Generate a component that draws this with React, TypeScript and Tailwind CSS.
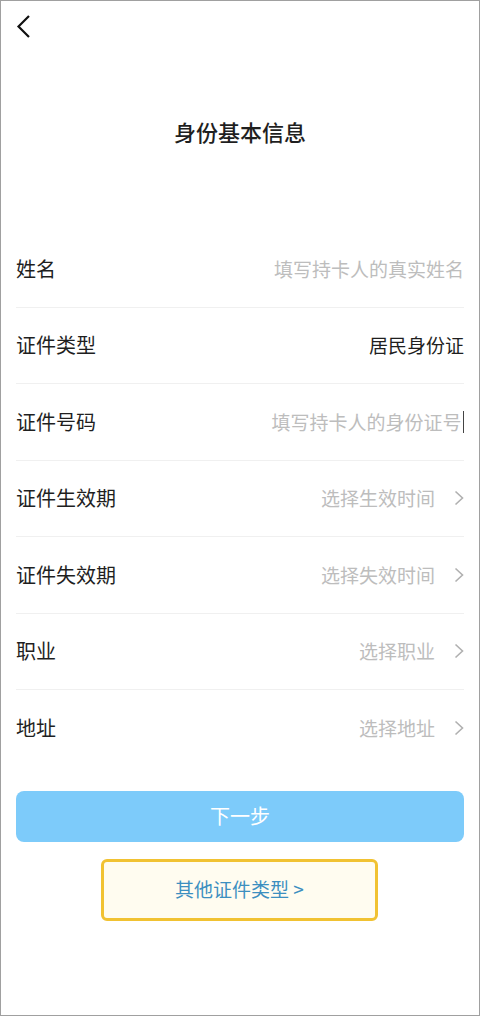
type Row = {
  label: string
  value: string
  kind: 'input' | 'value' | 'select'
  caret?: boolean
}

const rows: Row[] = [
  { label: '姓名', value: '填写持卡人的真实姓名', kind: 'input' },
  { label: '证件类型', value: '居民身份证', kind: 'value' },
  { label: '证件号码', value: '填写持卡人的身份证号', kind: 'input', caret: true },
  { label: '证件生效期', value: '选择生效时间', kind: 'select' },
  { label: '证件失效期', value: '选择失效时间', kind: 'select' },
  { label: '职业', value: '选择职业', kind: 'select' },
  { label: '地址', value: '选择地址', kind: 'select' },
]

function Arrow() {
  return (
    <svg width="10" height="16" viewBox="0 0 10 16" className="ml-[19px] shrink-0">
      <polyline points="1.5,1.5 8.5,8 1.5,14.5" fill="none" stroke="#b0b0b0" strokeWidth="1.6" />
    </svg>
  )
}

export default function App() {
  return (
    <main
      className="w-[480px] h-[1016px] bg-white border border-[#a0a0a0] flex flex-col text-[#1f1f1f] overflow-hidden"
      style={{ fontFamily: '"Noto Sans CJK SC", "Noto Sans", sans-serif' }}
    >
      {/* Header */}
      <div className="h-[52px] pt-[14px] pl-[15px]">
        <svg width="16" height="24" viewBox="0 0 16 24">
          <polyline points="13,1 2.5,11.5 13,22" fill="none" stroke="#111" strokeWidth="2.2" />
        </svg>
      </div>
      <h1 className="text-center text-[22px] font-medium mt-[62px] leading-[32px]">身份基本信息</h1>

      {/* Form */}
      <div className="mt-[84px] px-[15px]">
        {rows.map((row, i) => (
          <div
            key={row.label}
            className={`h-[76.5px] flex items-center justify-between ${
              i < rows.length - 1 ? 'border-b border-[#f0f0f0]' : ''
            }`}
          >
            <span className="text-[20px]">{row.label}</span>
            <div className="flex items-center">
              <span
                className={`text-[19px] ${
                  row.kind === 'value' ? 'text-[#1f1f1f]' : 'text-[#bdbdbd]'
                }`}
              >
                {row.value}
              </span>
              {row.caret && <span className="w-[1.5px] h-[22px] bg-[#444] ml-[1px]" />}
              {row.kind === 'select' && <Arrow />}
            </div>
          </div>
        ))}
      </div>

      {/* Actions */}
      <div className="px-[15px] mt-[24px]">
        <button className="w-full h-[51px] rounded-lg bg-[#7dcbfa] text-white text-[20px]">下一步</button>
      </div>
      <div className="flex justify-center mt-[17px]">
        <button className="w-[277px] h-[62px] ml-[-1px] rounded-md border-[3px] border-[#f1c232] bg-[#fffcf0] text-[#3c8fc0] text-[19px]">
          其他证件类型 &gt;
        </button>
      </div>
    </main>
  )
}
